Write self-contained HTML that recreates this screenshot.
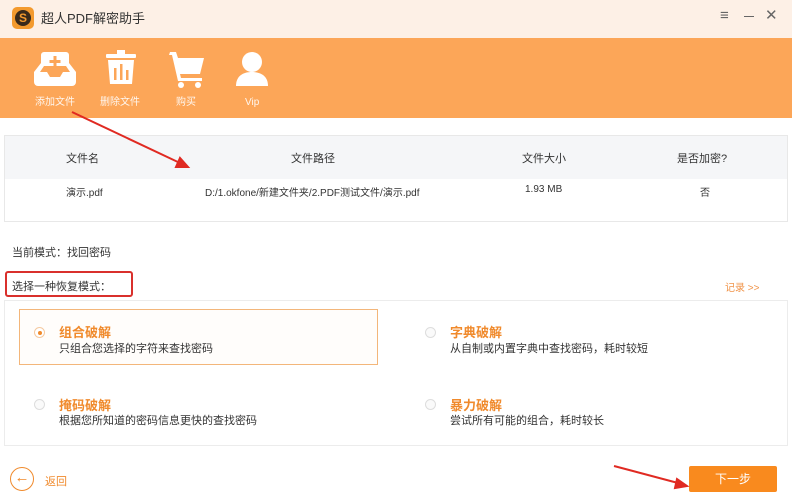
<!DOCTYPE html>
<html><head><meta charset="utf-8"><style>
*{margin:0;padding:0;box-sizing:border-box}
body{width:792px;height:500px;overflow:hidden;background:#fff;font-family:"Liberation Sans","Noto Sans CJK SC",sans-serif;position:relative;color:#333}
.a{position:absolute;white-space:nowrap}
.f11{font-size:11px}
.t{color:#f08a2c;font-size:13px;font-weight:bold}
.r{width:11px;height:11px;border-radius:50%;border:1px solid #ddd;background:#fafafa}
</style></head><body>
<div class="a" style="left:0;top:0;width:792px;height:38px;background:#fdf0e6"></div>
<div class="a" style="left:12px;top:7px;width:22px;height:22px;border-radius:5px;background:#f39a2e"><div style="margin:3px;width:16px;height:16px;border-radius:50%;background:#3a2a1a;color:#f39a2e;font-size:12px;font-weight:bold;text-align:center;line-height:16px">S</div></div>
<div class="a" style="left:41px;top:8px;font-size:13px;color:#333">超人PDF解密助手</div>
<div class="a" style="left:720px;top:7px;font-size:15px;color:#666">≡</div>
<div class="a" style="left:744px;top:16px;width:10px;height:1px;background:#666"></div>
<div class="a" style="left:765px;top:6px;font-size:15px;color:#666">✕</div>
<div class="a" style="left:0;top:38px;width:792px;height:80px;background:#fca658"></div>
<svg class="a" style="left:0;top:38px" width="300" height="80">
<g fill="#fff">
<path d="M44 14h22a3 3 0 0 1 3 3v8l7 9v10a4 4 0 0 1-4 4H38a4 4 0 0 1-4-4V34l7-9v-8a3 3 0 0 1 3-3z"/>
<path d="M40 34h7l3 5h10l3-5h7l-4-6H44z" fill="#fca658"/>
<rect x="53.5" y="18" width="3" height="11" fill="#fca658"/><rect x="49.5" y="22" width="11" height="3" fill="#fca658"/>
<rect x="106" y="16" width="30" height="4" rx="1"/><rect x="117" y="12" width="8" height="4"/>
<path d="M108 22h26l-2 24h-22z"/>
<rect x="114" y="30" width="2.5" height="12" fill="#fca658"/><rect x="120" y="26" width="2.5" height="16" fill="#fca658"/><rect x="126" y="32" width="2.5" height="10" fill="#fca658"/>
<path d="M170 14h6l2 6h26l-4 16h-20l1 4h21v3h-24l-6-26h-3z"/><circle cx="181" cy="47" r="3"/><circle cx="198" cy="47" r="3"/>
<circle cx="252" cy="24" r="10"/><path d="M236 48c0-10 7-14 16-14s16 4 16 14z"/>
</g>
<g fill="#fff" font-size="10" font-family="Liberation Sans,Noto Sans CJK SC,sans-serif" opacity=".9">
<text x="35" y="67">添加文件</text><text x="100" y="67">删除文件</text><text x="176" y="67">购买</text><text x="245" y="67">Vip</text></g>
</svg>
<div class="a" style="left:4px;top:135px;width:784px;height:87px;border:1px solid #e8e8e8"></div>
<div class="a" style="left:5px;top:136px;width:782px;height:43px;background:#f5f6f8"></div>
<div class="a f11" style="left:66px;top:150px">文件名</div>
<div class="a f11" style="left:291px;top:150px">文件路径</div>
<div class="a f11" style="left:522px;top:150px">文件大小</div>
<div class="a f11" style="left:677px;top:150px">是否加密?</div>
<div class="a" style="left:66px;top:184px;font-size:10px">演示.pdf</div>
<div class="a" style="left:205px;top:184px;font-size:10px">D:/1.okfone/新建文件夹/2.PDF测试文件/演示.pdf</div>
<div class="a" style="left:525px;top:184px;font-size:10px">1.93 MB</div>
<div class="a" style="left:700px;top:184px;font-size:10px">否</div>
<div class="a f11" style="left:12px;top:244px">当前模式：找回密码</div>
<div class="a" style="left:5px;top:271px;width:128px;height:26px;border:2px solid #d9302c;border-radius:3px"></div>
<div class="a f11" style="left:12px;top:278px">选择一种恢复模式：</div>
<div class="a" style="left:725px;top:279px;font-size:10px;color:#f0944a">记录 &gt;&gt;</div>
<div class="a" style="left:4px;top:300px;width:784px;height:146px;border:1px solid #ececec"></div>
<div class="a" style="left:19px;top:309px;width:359px;height:56px;border:1px solid #f3b67a;background:#fffdfb"></div>
<div class="a r" style="left:34px;top:327px;border-color:#f5c9a0;background:#fff"><div style="margin:2.5px;width:4px;height:4px;border-radius:50%;background:#f08a2c"></div></div>
<div class="a t" style="left:59px;top:322px">组合破解</div>
<div class="a f11" style="left:59px;top:340px">只组合您选择的字符来查找密码</div>
<div class="a r" style="left:425px;top:327px"></div>
<div class="a t" style="left:450px;top:322px">字典破解</div>
<div class="a f11" style="left:450px;top:340px">从自制或内置字典中查找密码，耗时较短</div>
<div class="a r" style="left:34px;top:399px"></div>
<div class="a t" style="left:59px;top:395px">掩码破解</div>
<div class="a f11" style="left:59px;top:412px">根据您所知道的密码信息更快的查找密码</div>
<div class="a r" style="left:425px;top:399px"></div>
<div class="a t" style="left:450px;top:395px">暴力破解</div>
<div class="a f11" style="left:450px;top:412px">尝试所有可能的组合，耗时较长</div>
<div class="a" style="left:10px;top:467px;width:24px;height:24px;border-radius:50%;border:1.5px solid #f08a2c;color:#f08a2c;font-size:15px;text-align:center;line-height:20px">←</div>
<div class="a f11" style="left:45px;top:473px;color:#f08a2c">返回</div>
<div class="a" style="left:689px;top:466px;width:88px;height:26px;background:#f98a1e;border-radius:2px;color:#fff;font-size:12px;text-align:center;line-height:26px">下一步</div>
<svg class="a" style="left:0;top:0" width="792" height="500">
<g stroke="#e02a22" stroke-width="2" fill="#e02a22">
<line x1="72" y1="112" x2="180" y2="163"/><path d="M188 167l-12 0l4-9z"/>
<line x1="614" y1="466" x2="678" y2="483"/><path d="M687 486l-12 2l2-9z"/>
</g></svg>
</body></html>
